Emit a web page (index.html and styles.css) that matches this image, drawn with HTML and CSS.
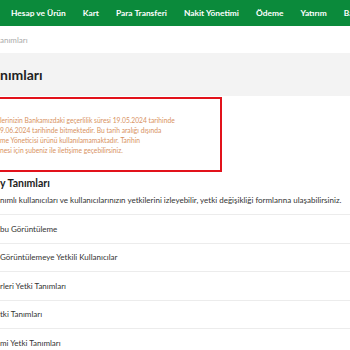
FILE: index.html
```html
<!DOCTYPE html>
<html lang="tr">
<head>
<meta charset="utf-8">
<link rel="stylesheet" href="styles.css">
</head>
<body>
<nav class="nav">
  <span class="nav-item">Hesap ve Ürün</span>
  <span class="nav-item">Kart</span>
  <span class="nav-item">Para Transferi</span>
  <span class="nav-item">Nakit Yönetimi</span>
  <span class="nav-item">Ödeme</span>
  <span class="nav-item">Yatırım</span>
  <span class="nav-item">Başvurular</span>
</nav>
<div class="crumb">anımları</div>
<div class="title-band"><h1 class="title">nımları</h1></div>
<div class="alert">
  <p class="alert-text">lerinizin Bankamızdaki geçerlilik süresi 19.05.2024 tarihinde<br>9.06.2024 tarihinde bitmektedir. Bu tarih aralığı dışında<br>me Yöneticisi ürünü kullanılamamaktadır. Tarihin<br>nesi için şubeniz ile iletişime geçebilirsiniz.</p>
</div>
<h2 class="section-title">y Tanımları</h2>
<p class="section-desc">nımlı kullanıcıları ve kullanıcılarınızın yetkilerini izleyebilir, yetki değişikliği formlarına ulaşabilirsiniz.</p>
<ul class="list">
  <li class="list-item">bu Görüntüleme</li>
  <li class="list-item">Görüntülemeye Yetkili Kullanıcılar</li>
  <li class="list-item">rleri Yetki Tanımları</li>
  <li class="list-item">tki Tanımları</li>
  <li class="list-item">mi Yetki Tanımları</li>
</ul>
</body>
</html>
```
FILE: styles.css
```css
html, body {
  margin: 0;
  padding: 0;
  background: #ffffff;
  overflow: hidden;
  width: 350px;
  height: 350px;
}
body {
  font-family: Lato, "Noto Sans", sans-serif;
  color: #222;
}
.nav {
  height: 26px;
  background: #0b8a3b;
  display: flex;
  align-items: center;
  padding-left: 11px;
  gap: 17px;
  white-space: nowrap;
  overflow: hidden;
}
.nav-item {
  color: #fff;
  font-weight: 700;
  font-size: 8.4px;
}
.crumb {
  height: 27px;
  display: flex;
  align-items: center;
  font-size: 8px;
  color: #aaa;
}
.title-band {
  height: 43px;
  background: #f3f3f3;
  display: flex;
  align-items: center;
}
.title {
  margin: 0;
  font-size: 14px;
  font-weight: 700;
  color: #222;
}
.alert {
  width: 222px;
  height: 75px;
  box-sizing: border-box;
  border: 2px solid #e2121b;
  border-left: none;
  margin-top: 1px;
  display: flex;
  align-items: center;
}
.alert-text {
  margin: 0;
  font-size: 6.7px;
  line-height: 10px;
  color: #d89262;
}
.section-title {
  margin: 3px 0 0;
  font-size: 10.5px;
  font-weight: 700;
  color: #1c1c1c;
  line-height: 16px;
}
.section-desc {
  margin: 2px 0 0;
  font-size: 8px;
  line-height: 14px;
  color: #333;
  white-space: nowrap;
}
.list {
  list-style: none;
  margin: 7px 0 0;
  padding: 0;
  border-top: 1px solid #ececec;
}
.list-item {
  height: 27.5px;
  border-bottom: 1px solid #ececec;
  display: flex;
  align-items: center;
  font-size: 8px;
  color: #333;
}
```
